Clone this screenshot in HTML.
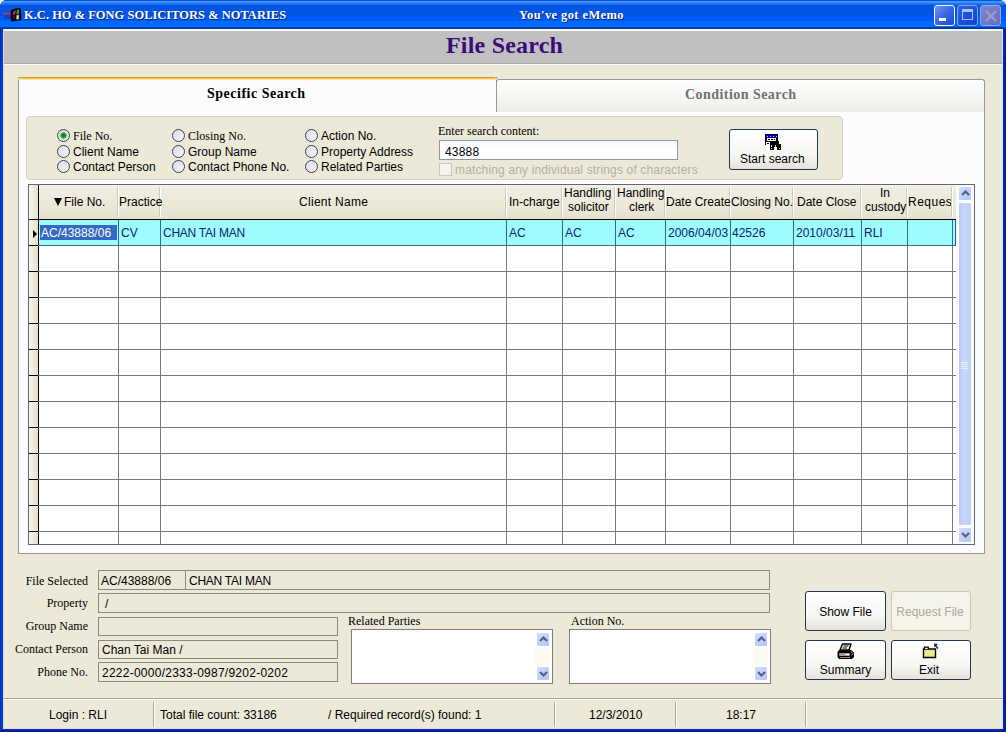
<!DOCTYPE html>
<html><head><meta charset="utf-8">
<style>
*{box-sizing:border-box;margin:0;padding:0}
html,body{width:1006px;height:732px;overflow:hidden;background:#F4F4EC;font-family:"Liberation Sans",sans-serif;font-size:12px;color:#000}
.a{position:absolute;white-space:nowrap}
.serif{font-family:"Liberation Serif",serif}
#win{position:absolute;left:0;top:0;width:1006px;height:732px;background:#0A3CCC;box-shadow:inset -1px -1px 0 #001A90,inset 1px 0 0 #0032B8;border-radius:7px 7px 0 0}
#title{left:0;top:0;width:1006px;height:29px;background:linear-gradient(#0A4FD4 0px,#0A4FD4 1px,#3A93FF 1px,#3A93FF 3px,#2170F0 3px,#2170F0 5px,#0055E3 5px,#0055E3 16px,#005AF8 16px,#005AF8 21px,#006AFF 21px,#006AFF 27px,#0048B8 27px,#00308C 29px);border-radius:7px 7px 0 0}
#client{left:3px;top:29px;width:1000px;height:700px;background:#ECE9D8}
#hdr{left:4px;top:31px;width:998px;height:34px;background:#C0C0C0;border-bottom:1px solid #FAFCFC;box-shadow:inset 0 -1px 0 #A9A9A9}
.wbtn{top:5px;width:21px;height:21px;border:1px solid #fff;border-radius:3px;background:linear-gradient(135deg,#5A8EF8,#1C5CE8 50%,#0F4AD8)}
.tt{color:#fff;font-family:"Liberation Serif",serif;font-weight:bold;font-size:12px;text-shadow:1px 1px 0 #0A246A}
.box{border:1px solid #8C8A80;background:#ECE9D8}
.btn{border:1px solid #1F3558;border-radius:3px;background:linear-gradient(#FFFFFF,#F6F6F2 65%,#E4E2D8);text-align:center}
.radio{width:13px;height:13px;border:1px solid #3A4450;border-radius:50%;background:linear-gradient(135deg,#DADCEA,#F6F6FC)}
.gl{background:#7F7F7F}
</style></head><body>
<div id="win"></div>
<div id="title" class="a"></div>
<div id="client" class="a"></div>
<div class="a" style="left:3px;top:29px;width:1000px;height:2px;background:#F2F8FF"></div>
<div class="a" style="left:3px;top:29px;width:1px;height:700px;background:#D0DCF8"></div>
<div id="hdr" class="a"></div>
<div class="a serif" style="left:446px;top:32px;font-size:24px;font-weight:bold;color:#3A0C7A;letter-spacing:0.2px">File Search</div>

<!-- title text -->
<svg class="a" style="left:0;top:0" width="24" height="24" viewBox="0 0 24 24">
<path d="M3 13 Q7 12 11.5 12.5 L11.5 15 Q7 14.5 3 15.5 Z" fill="#B03868" opacity=".75"/>
<path d="M4 16 Q7 15 11.5 15.5 L11.5 19.5 Q7 18.5 4 19.5 Z" fill="#2434A8" opacity=".75"/>
<path d="M10.5 11 Q13 8 20.5 8 Q21.5 14 21.5 20 Q16 21 11 21.5 Z" fill="#050510"/>
<path d="M13.6 11 L15.8 10.2 L15 14.5 L12.8 15 Z" fill="#B84050"/>
<path d="M16.9 10 L19 9.6 L18.8 14 L16.5 14.3 Z" fill="#3EA23E"/>
<path d="M16.5 15.2 L18.8 14.9 L18.8 19 L16.5 19.4 Z" fill="#E6EE9C"/>
<path d="M12.8 15.6 L15 15.3 L15 19 L12.8 19.5 Z" fill="#141C5A"/>
</svg>
<div class="a tt" style="left:24px;top:8px;font-size:12.5px">K.C. HO &amp; FONG SOLICITORS &amp; NOTARIES</div>
<div class="a tt" style="left:519px;top:8px;font-size:12.5px;letter-spacing:0.4px">You've got eMemo</div>
<div class="a" style="left:934px;top:5px;width:21px;height:21px;border:1px solid #F0F8FF;border-radius:3px;background:linear-gradient(135deg,#7294F0,#3A66E4 50%,#1A4AD6)"><div class="a" style="left:4px;top:12px;width:7px;height:3px;background:#fff"></div></div>
<div class="a" style="left:957px;top:5px;width:21px;height:21px;border:1px solid #78A8FF;border-radius:3px;background:linear-gradient(135deg,#2F62E8,#1A4ED8 60%,#1445CC)"><div class="a" style="left:4px;top:3px;width:11px;height:11px;border:1px solid #A8C4FF;border-top:3px solid #A8C4FF"></div></div>
<div class="a" style="left:980px;top:5px;width:21px;height:21px;border:1px solid #8AA8F4;border-radius:3px;background:linear-gradient(135deg,#7E88D8,#7078C8 60%,#6A6CC0)"><svg class="a" style="left:3px;top:3px" width="14" height="14"><path d="M2 2L12 12M12 2L2 12" stroke="#A89AC8" stroke-width="2.2"/></svg></div>

<!-- tab control -->
<div class="a" style="left:18px;top:111px;width:967px;height:443px;border:1px solid #919B9C;background:#FCFCFE"></div>
<div class="a" style="left:496px;top:79px;width:489px;height:33px;border:1px solid #919B9C;border-bottom:none;border-radius:3px 3px 0 0;background:linear-gradient(#FFFFFF,#F3F3EF 70%,#ECEBE6)"></div>
<div class="a" style="left:18px;top:77px;width:479px;height:35px;border:1px solid #919B9C;border-top:none;border-bottom:none;background:#FCFCFE"></div>
<div class="a" style="left:18px;top:77px;width:479px;height:3px;background:linear-gradient(#D29A34 0,#D29A34 1px,#FFC548 1px,#FFC548 2px,#FFE7A6 2px);border-radius:3px 3px 0 0"></div>
<div class="a serif" style="left:207px;top:86px;font-size:14px;font-weight:bold;letter-spacing:0.5px">Specific Search</div>
<div class="a serif" style="left:685px;top:87px;font-size:14px;font-weight:bold;color:#707070;letter-spacing:0.45px">Condition Search</div>

<div class="a" style="left:26px;top:116px;width:817px;height:64px;border:1px solid #D6D3C4;border-radius:4px;background:#ECE9D8"></div>
<div class="a radio" style="left:57px;top:129px;width:13px;height:13px;"><div class="a" style="left:1px;top:1px;width:9px;height:9px;border-radius:50%;background:radial-gradient(circle,#1A6E1A 0,#2A8A2A 2px,#A8E4A8 3.5px,#D0F0D0 4.5px)"></div></div>
<div class="a serif" style="left:73px;top:129px;font-size:12px">File No.</div>
<div class="a radio" style="left:57px;top:145px;width:13px;height:13px;"></div>
<div class="a" style="left:73px;top:145px;font-size:12px">Client Name</div>
<div class="a radio" style="left:57px;top:160px;width:13px;height:13px;"></div>
<div class="a" style="left:73px;top:160px;font-size:12px">Contact Person</div>
<div class="a radio" style="left:172px;top:129px;width:13px;height:13px;"></div>
<div class="a serif" style="left:188px;top:129px;font-size:12px">Closing No.</div>
<div class="a radio" style="left:172px;top:145px;width:13px;height:13px;"></div>
<div class="a" style="left:188px;top:145px;font-size:12px">Group Name</div>
<div class="a radio" style="left:172px;top:160px;width:13px;height:13px;"></div>
<div class="a" style="left:188px;top:160px;font-size:12px">Contact Phone No.</div>
<div class="a radio" style="left:305px;top:129px;width:13px;height:13px;"></div>
<div class="a" style="left:321px;top:129px;font-size:12px">Action No.</div>
<div class="a radio" style="left:305px;top:145px;width:13px;height:13px;"></div>
<div class="a" style="left:321px;top:145px;font-size:12px">Property Address</div>
<div class="a radio" style="left:305px;top:160px;width:13px;height:13px;"></div>
<div class="a" style="left:321px;top:160px;font-size:12px">Related Parties</div>
<div class="a serif" style="left:438px;top:124px;font-size:12px">Enter search content:</div>
<div class="a" style="left:439px;top:140px;width:239px;height:20px;border:1px solid #8A98A6;background:linear-gradient(#F4F6FA,#FFFFFF 40%);padding:4px 0 0 5px;letter-spacing:0.2px">43888</div>
<div class="a" style="left:439px;top:163px;width:13px;height:13px;border:1px solid #CAC8BB;background:#F4F3EE"></div>
<div class="a" style="left:455px;top:163px;color:#B4B0A2;letter-spacing:0.15px">matching any individual strings of characters</div>
<div class="a btn" style="left:729px;top:129px;width:89px;height:41px;"></div>
<div class="a" style="left:740px;top:152px;font-size:12px">Start search</div>
<svg class="a" style="left:765px;top:134px" width="17" height="17" viewBox="0 0 17 17" shape-rendering="crispEdges">
<rect x="0" y="0" width="13" height="11" fill="#000"/>
<rect x="1" y="1" width="11" height="3" fill="#0000C8"/>
<rect x="2" y="2" width="1" height="1" fill="#C8C8FF"/><rect x="5" y="2" width="1" height="1" fill="#C8C8FF"/><rect x="8" y="2" width="1" height="1" fill="#C8C8FF"/><rect x="11" y="2" width="1" height="1" fill="#C8C8FF"/>
<rect x="1" y="4" width="1" height="3" fill="#0000C8"/>
<rect x="2" y="4" width="9" height="3" fill="#F4F4FF"/>
<rect x="3" y="5" width="2" height="1" fill="#000"/><rect x="6" y="5" width="2" height="1" fill="#000"/><rect x="9" y="5" width="1" height="1" fill="#000"/>
<rect x="1" y="8" width="4" height="3" fill="#F4F4FF"/><rect x="2" y="9" width="2" height="1" fill="#000"/>
<rect x="6" y="7" width="8" height="5" fill="#000"/>
<rect x="5" y="10" width="4" height="6" fill="#000"/><rect x="12" y="10" width="4" height="6" fill="#000"/>
<rect x="9" y="9" width="3" height="4" fill="#000"/>
<rect x="6" y="11" width="1" height="2" fill="#DDD"/><rect x="10" y="11" width="1" height="2" fill="#DDD"/>
<rect x="6" y="14" width="1" height="1" fill="#DDD"/><rect x="14" y="14" width="1" height="1" fill="#DDD"/>
</svg>
<div class="a" style="left:28px;top:184px;width:947px;height:361px;border:1px solid #64666E;background:#fff"></div>
<div class="a" style="left:29px;top:185px;width:927px;height:34px;background:linear-gradient(#F4F3EC 0,#EFEDE2 3px,#ECE9D8 20px,#E6E2D0 34px)"></div>
<div class="a" style="left:29px;top:185px;width:9px;height:359px;background:linear-gradient(90deg,#F8F7F2,#ECE9D8 5px,#E4E0D0)"></div>
<div class="a" style="left:117px;top:187px;width:1px;height:30px;background:#CFCBBB"></div>
<div class="a" style="left:118px;top:187px;width:1px;height:30px;background:#FFFFFF"></div>
<div class="a" style="left:159px;top:187px;width:1px;height:30px;background:#CFCBBB"></div>
<div class="a" style="left:160px;top:187px;width:1px;height:30px;background:#FFFFFF"></div>
<div class="a" style="left:505px;top:187px;width:1px;height:30px;background:#CFCBBB"></div>
<div class="a" style="left:506px;top:187px;width:1px;height:30px;background:#FFFFFF"></div>
<div class="a" style="left:561px;top:187px;width:1px;height:30px;background:#CFCBBB"></div>
<div class="a" style="left:562px;top:187px;width:1px;height:30px;background:#FFFFFF"></div>
<div class="a" style="left:614px;top:187px;width:1px;height:30px;background:#CFCBBB"></div>
<div class="a" style="left:615px;top:187px;width:1px;height:30px;background:#FFFFFF"></div>
<div class="a" style="left:664px;top:187px;width:1px;height:30px;background:#CFCBBB"></div>
<div class="a" style="left:665px;top:187px;width:1px;height:30px;background:#FFFFFF"></div>
<div class="a" style="left:729px;top:187px;width:1px;height:30px;background:#CFCBBB"></div>
<div class="a" style="left:730px;top:187px;width:1px;height:30px;background:#FFFFFF"></div>
<div class="a" style="left:792px;top:187px;width:1px;height:30px;background:#CFCBBB"></div>
<div class="a" style="left:793px;top:187px;width:1px;height:30px;background:#FFFFFF"></div>
<div class="a" style="left:860px;top:187px;width:1px;height:30px;background:#CFCBBB"></div>
<div class="a" style="left:861px;top:187px;width:1px;height:30px;background:#FFFFFF"></div>
<div class="a" style="left:906px;top:187px;width:1px;height:30px;background:#CFCBBB"></div>
<div class="a" style="left:907px;top:187px;width:1px;height:30px;background:#FFFFFF"></div>
<div class="a" style="left:951px;top:187px;width:1px;height:30px;background:#CFCBBB"></div>
<div class="a" style="left:952px;top:187px;width:1px;height:30px;background:#FFFFFF"></div>
<div class="a" style="left:118px;top:220px;width:1px;height:324px;background:#787878"></div>
<div class="a" style="left:160px;top:220px;width:1px;height:324px;background:#787878"></div>
<div class="a" style="left:506px;top:220px;width:1px;height:324px;background:#787878"></div>
<div class="a" style="left:562px;top:220px;width:1px;height:324px;background:#787878"></div>
<div class="a" style="left:615px;top:220px;width:1px;height:324px;background:#787878"></div>
<div class="a" style="left:665px;top:220px;width:1px;height:324px;background:#787878"></div>
<div class="a" style="left:730px;top:220px;width:1px;height:324px;background:#787878"></div>
<div class="a" style="left:793px;top:220px;width:1px;height:324px;background:#787878"></div>
<div class="a" style="left:861px;top:220px;width:1px;height:324px;background:#787878"></div>
<div class="a" style="left:907px;top:220px;width:1px;height:324px;background:#787878"></div>
<div class="a" style="left:952px;top:220px;width:1px;height:324px;background:#787878"></div>
<div class="a" style="left:38px;top:185px;width:1px;height:359px;background:#000"></div>
<div class="a" style="left:29px;top:219px;width:927px;height:1px;background:#000"></div>
<div class="a" style="left:38px;top:245px;width:918px;height:1px;background:#787878"></div>
<div class="a" style="left:29px;top:245px;width:9px;height:1px;background:#000"></div>
<div class="a" style="left:38px;top:271px;width:918px;height:1px;background:#787878"></div>
<div class="a" style="left:29px;top:271px;width:9px;height:1px;background:#000"></div>
<div class="a" style="left:38px;top:297px;width:918px;height:1px;background:#787878"></div>
<div class="a" style="left:29px;top:297px;width:9px;height:1px;background:#000"></div>
<div class="a" style="left:38px;top:323px;width:918px;height:1px;background:#787878"></div>
<div class="a" style="left:29px;top:323px;width:9px;height:1px;background:#000"></div>
<div class="a" style="left:38px;top:349px;width:918px;height:1px;background:#787878"></div>
<div class="a" style="left:29px;top:349px;width:9px;height:1px;background:#000"></div>
<div class="a" style="left:38px;top:375px;width:918px;height:1px;background:#787878"></div>
<div class="a" style="left:29px;top:375px;width:9px;height:1px;background:#000"></div>
<div class="a" style="left:38px;top:401px;width:918px;height:1px;background:#787878"></div>
<div class="a" style="left:29px;top:401px;width:9px;height:1px;background:#000"></div>
<div class="a" style="left:38px;top:427px;width:918px;height:1px;background:#787878"></div>
<div class="a" style="left:29px;top:427px;width:9px;height:1px;background:#000"></div>
<div class="a" style="left:38px;top:453px;width:918px;height:1px;background:#787878"></div>
<div class="a" style="left:29px;top:453px;width:9px;height:1px;background:#000"></div>
<div class="a" style="left:38px;top:479px;width:918px;height:1px;background:#787878"></div>
<div class="a" style="left:29px;top:479px;width:9px;height:1px;background:#000"></div>
<div class="a" style="left:38px;top:505px;width:918px;height:1px;background:#787878"></div>
<div class="a" style="left:29px;top:505px;width:9px;height:1px;background:#000"></div>
<div class="a" style="left:38px;top:531px;width:918px;height:1px;background:#787878"></div>
<div class="a" style="left:29px;top:531px;width:9px;height:1px;background:#000"></div>
<div class="a" style="left:39px;top:220px;width:917px;height:26px;background:#9EFCFF;border-bottom:1px solid #3A6892;border-right:1px solid #2B50A8"></div>
<div class="a" style="left:118px;top:220px;width:1px;height:25px;background:#2F6C8C"></div>
<div class="a" style="left:160px;top:220px;width:1px;height:25px;background:#2F6C8C"></div>
<div class="a" style="left:506px;top:220px;width:1px;height:25px;background:#2F6C8C"></div>
<div class="a" style="left:562px;top:220px;width:1px;height:25px;background:#2F6C8C"></div>
<div class="a" style="left:615px;top:220px;width:1px;height:25px;background:#2F6C8C"></div>
<div class="a" style="left:665px;top:220px;width:1px;height:25px;background:#2F6C8C"></div>
<div class="a" style="left:730px;top:220px;width:1px;height:25px;background:#2F6C8C"></div>
<div class="a" style="left:793px;top:220px;width:1px;height:25px;background:#2F6C8C"></div>
<div class="a" style="left:861px;top:220px;width:1px;height:25px;background:#2F6C8C"></div>
<div class="a" style="left:907px;top:220px;width:1px;height:25px;background:#2F6C8C"></div>
<div class="a" style="left:952px;top:220px;width:1px;height:25px;background:#2F6C8C"></div>
<div class="a" style="left:40px;top:225px;width:77px;height:15px;background:#3468C4"></div>
<div class="a" style="left:33px;top:230px;width:0;height:0;border-left:4px solid #000;border-top:4px solid transparent;border-bottom:4px solid transparent"></div>
<div class="a" style="left:54px;top:198px;width:0;height:0;border-top:8px solid #000;border-left:4px solid transparent;border-right:4px solid transparent"></div>
<div class="a" style="left:64px;top:195px;">File No.</div>
<div class="a" style="left:119px;top:195px;">Practice</div>
<div class="a" style="left:299px;top:195px;letter-spacing:0.3px">Client Name</div>
<div class="a" style="left:509px;top:195px;">In-charge</div>
<div class="a" style="left:564px;top:186px;">Handling</div>
<div class="a" style="left:568px;top:200px;">solicitor</div>
<div class="a" style="left:617px;top:186px;">Handling</div>
<div class="a" style="left:629px;top:200px;">clerk</div>
<div class="a" style="left:666px;top:195px;">Date Create</div>
<div class="a" style="left:731px;top:195px;">Closing No.</div>
<div class="a" style="left:797px;top:195px;">Date Close</div>
<div class="a" style="left:880px;top:186px;">In</div>
<div class="a" style="left:865px;top:200px;">custody</div>
<div class="a" style="left:908px;top:195px;width:43px;overflow:hidden;letter-spacing:0.5px">Request</div>
<div class="a" style="left:41px;top:226px;color:#fff">AC/43888/06</div>
<div class="a" style="left:121px;top:226px;color:#0A2468">CV</div>
<div class="a" style="left:163px;top:226px;color:#0A2468;letter-spacing:-0.25px">CHAN TAI MAN</div>
<div class="a" style="left:509px;top:226px;color:#0A2468">AC</div>
<div class="a" style="left:565px;top:226px;color:#0A2468">AC</div>
<div class="a" style="left:618px;top:226px;color:#0A2468">AC</div>
<div class="a" style="left:668px;top:226px;color:#0A2468">2006/04/03</div>
<div class="a" style="left:732px;top:226px;color:#0A2468">42526</div>
<div class="a" style="left:796px;top:226px;color:#0A2468">2010/03/11</div>
<div class="a" style="left:864px;top:226px;color:#0A2468">RLI</div>
<div class="a" style="left:956px;top:185px;width:18px;height:359px;background:#FAFAF8"></div>
<div class="a" style="left:958px;top:186px;width:14px;height:15px;border:1px solid #fff;border-radius:2px;background:linear-gradient(135deg,#D4DEFE,#C0CEF8 60%,#B4C4F2)"><svg class="a" style="left:0;top:0px" width="13" height="13"><path d="M3 8 L6.5 4.5 L10 8" fill="none" stroke="#4D6185" stroke-width="2.2"/></svg></div>
<div class="a" style="left:958px;top:202px;width:14px;height:324px;border:1px solid #fff;border-radius:2px;background:linear-gradient(90deg,#B8CAF6,#C8D6FC 40%,#BECFF8)"></div>
<div class="a" style="left:961px;top:362px;width:7px;height:1px;background:#EEF2FE"></div>
<div class="a" style="left:961px;top:364px;width:7px;height:1px;background:#EEF2FE"></div>
<div class="a" style="left:961px;top:366px;width:7px;height:1px;background:#EEF2FE"></div>
<div class="a" style="left:961px;top:368px;width:7px;height:1px;background:#EEF2FE"></div>
<div class="a" style="left:958px;top:527px;width:14px;height:16px;border:1px solid #fff;border-radius:2px;background:linear-gradient(135deg,#D4DEFE,#C0CEF8 60%,#B4C4F2)"><svg class="a" style="left:0;top:0px" width="13" height="13"><path d="M3 5 L6.5 8.5 L10 5" fill="none" stroke="#4D6185" stroke-width="2.2"/></svg></div>
<div class="a serif" style="right:918px;top:574px;font-size:12px">File Selected</div>
<div class="a serif" style="right:918px;top:596px;font-size:12px">Property</div>
<div class="a serif" style="right:918px;top:619px;font-size:12px">Group Name</div>
<div class="a serif" style="right:918px;top:642px;font-size:12px">Contact Person</div>
<div class="a serif" style="right:918px;top:665px;font-size:12px">Phone No.</div>
<div class="a box" style="left:98px;top:570px;width:672px;height:20px;"></div>
<div class="a box" style="left:98px;top:593px;width:672px;height:20px;"></div>
<div class="a box" style="left:98px;top:617px;width:240px;height:19px;"></div>
<div class="a box" style="left:98px;top:640px;width:240px;height:19px;"></div>
<div class="a box" style="left:98px;top:662px;width:240px;height:20px;"></div>
<div class="a" style="left:185px;top:571px;width:1px;height:18px;background:#8C8A80"></div>
<div class="a" style="left:101px;top:574px;">AC/43888/06</div>
<div class="a" style="left:189px;top:574px;letter-spacing:-0.25px">CHAN TAI MAN</div>
<div class="a" style="left:105px;top:597px;">/</div>
<div class="a" style="left:102px;top:643px;">Chan Tai Man /</div>
<div class="a" style="left:102px;top:666px;letter-spacing:0.25px">2222-0000/2333-0987/9202-0202</div>
<div class="a serif" style="left:348px;top:614px;font-size:12px">Related Parties</div>
<div class="a serif" style="left:571px;top:614px;font-size:12px">Action No.</div>
<div class="a" style="left:351px;top:629px;width:202px;height:55px;border:1px solid #7E7E7E;background:#fff"></div>
<div class="a" style="left:535px;top:648px;width:15px;height:17px;background:#FBFBF4"></div>
<div class="a" style="left:536px;top:632px;width:14px;height:15px;border:1px solid #fff;border-radius:2px;background:linear-gradient(135deg,#D4DEFE,#C0CEF8 60%,#B4C4F2)"><svg class="a" style="left:0;top:0px" width="13" height="13"><path d="M3 8 L6.5 4.5 L10 8" fill="none" stroke="#4D6185" stroke-width="2.2"/></svg></div>
<div class="a" style="left:536px;top:666px;width:14px;height:15px;border:1px solid #fff;border-radius:2px;background:linear-gradient(135deg,#D4DEFE,#C0CEF8 60%,#B4C4F2)"><svg class="a" style="left:0;top:0px" width="13" height="13"><path d="M3 5 L6.5 8.5 L10 5" fill="none" stroke="#4D6185" stroke-width="2.2"/></svg></div>
<div class="a" style="left:569px;top:629px;width:202px;height:55px;border:1px solid #7E7E7E;background:#fff"></div>
<div class="a" style="left:753px;top:648px;width:15px;height:17px;background:#FBFBF4"></div>
<div class="a" style="left:754px;top:632px;width:14px;height:15px;border:1px solid #fff;border-radius:2px;background:linear-gradient(135deg,#D4DEFE,#C0CEF8 60%,#B4C4F2)"><svg class="a" style="left:0;top:0px" width="13" height="13"><path d="M3 8 L6.5 4.5 L10 8" fill="none" stroke="#4D6185" stroke-width="2.2"/></svg></div>
<div class="a" style="left:754px;top:666px;width:14px;height:15px;border:1px solid #fff;border-radius:2px;background:linear-gradient(135deg,#D4DEFE,#C0CEF8 60%,#B4C4F2)"><svg class="a" style="left:0;top:0px" width="13" height="13"><path d="M3 5 L6.5 8.5 L10 5" fill="none" stroke="#4D6185" stroke-width="2.2"/></svg></div>
<div class="a btn" style="left:805px;top:591px;width:81px;height:40px;"></div>
<div class="a" style="left:805px;top:605px;width:81px;text-align:center;color:#000">Show File</div>
<div class="a btn" style="left:891px;top:591px;width:80px;height:40px;border-color:#C9C7BA;background:#F5F4EA;"></div>
<div class="a" style="left:890px;top:605px;width:80px;text-align:center;color:#ACA899">Request File</div>
<div class="a btn" style="left:805px;top:640px;width:81px;height:40px;"></div>
<div class="a" style="left:805px;top:663px;width:81px;text-align:center;color:#000">Summary</div>
<div class="a btn" style="left:891px;top:640px;width:80px;height:40px;"></div>
<div class="a" style="left:889px;top:663px;width:80px;text-align:center;color:#000">Exit</div>
<svg class="a" style="left:837px;top:643px" width="18" height="17" viewBox="0 0 18 17">
<path d="M5.5 1 L14 1 L12 7 L3 7 Z" fill="#fff" stroke="#000" stroke-width="1.4" stroke-linejoin="round"/>
<path d="M6.5 3 L11.5 3 M5.5 5 L10 5" stroke="#000" stroke-width="1"/>
<path d="M2 7 L14 7 L17 9.5 L17 14 L15 16 L2 16 L0.5 14 L0.5 9 Z" fill="#000"/>
<rect x="2" y="10" width="11" height="3" rx="1.2" fill="#9C9C9C"/><rect x="8.5" y="11" width="3.5" height="1" fill="#fff"/>
<rect x="3" y="14" width="10" height="1" fill="#8A8A8A"/>
<path d="M14 8.5 L16 10.5 M14.5 12.5 L16 11" stroke="#C8C8C8" stroke-width="0.8"/>
</svg>
<svg class="a" style="left:922px;top:643px" width="18" height="16" viewBox="0 0 18 16">
<path d="M1.5 6 L1.5 14.5 L13.5 14.5 L13.5 6 Z" fill="#E8EA8C" stroke="#000" stroke-width="1.4"/>
<path d="M2.5 6 L2.5 4.2 L6.3 4.2 L6.3 6" fill="#fff" stroke="#000" stroke-width="1.3"/>
<path d="M12 0.5 L16 1 L12.5 4.5 Z" fill="#0A1A70"/><path d="M13.8 2.6 L15.8 5.6" stroke="#0A1A70" stroke-width="1.4"/>
</svg>
<div class="a" style="left:1002px;top:31px;width:1px;height:698px;background:#D8E0F8"></div>
<div class="a" style="left:3px;top:728px;width:1000px;height:1px;background:#D8E0F8"></div>
<div class="a" style="left:0px;top:729px;width:1006px;height:3px;background:linear-gradient(#1434B4,#0A2298 1px,#001A8C)"></div>
<div class="a" style="left:1003px;top:29px;width:3px;height:700px;background:linear-gradient(90deg,#1236BE,#0A2298 1px,#001A8C)"></div>
<div class="a" style="left:3px;top:698px;width:1000px;height:1px;background:#ACA899"></div>
<div class="a" style="left:3px;top:699px;width:1000px;height:1px;background:#FFFFFF"></div>
<div class="a" style="left:153px;top:702px;width:1px;height:25px;background:#ACA899"></div>
<div class="a" style="left:154px;top:702px;width:1px;height:25px;background:#FFFFFF"></div>
<div class="a" style="left:554px;top:702px;width:1px;height:25px;background:#ACA899"></div>
<div class="a" style="left:555px;top:702px;width:1px;height:25px;background:#FFFFFF"></div>
<div class="a" style="left:675px;top:702px;width:1px;height:25px;background:#ACA899"></div>
<div class="a" style="left:676px;top:702px;width:1px;height:25px;background:#FFFFFF"></div>
<div class="a" style="left:805px;top:702px;width:1px;height:25px;background:#ACA899"></div>
<div class="a" style="left:806px;top:702px;width:1px;height:25px;background:#FFFFFF"></div>
<div class="a" style="left:49px;top:708px;">Login : RLI</div>
<div class="a" style="left:160px;top:708px;">Total file count: 33186</div>
<div class="a" style="left:328px;top:708px;">/ Required record(s) found: 1</div>
<div class="a" style="left:589px;top:708px;">12/3/2010</div>
<div class="a" style="left:726px;top:708px;">18:17</div>
</body></html>
